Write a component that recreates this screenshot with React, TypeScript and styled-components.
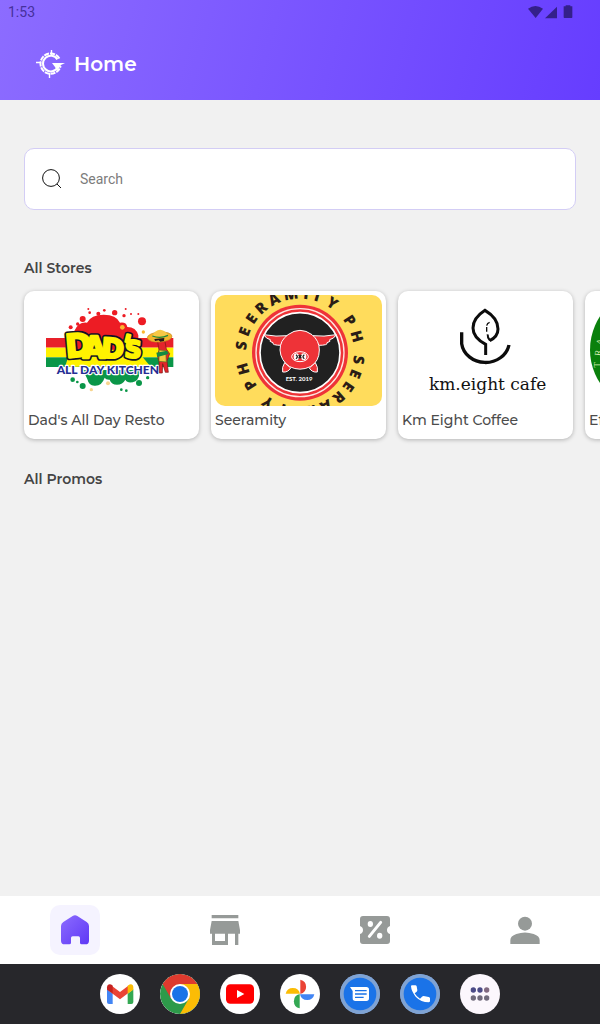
import React from 'react';
import styled, { createGlobalStyle } from 'styled-components';

const GlobalStyle = createGlobalStyle`
  * { box-sizing: border-box; }
  body {
    margin: 0;
    background: #f1f1f1;
    color: #444;
    font-family: Montserrat, Inter, sans-serif;
  }
`;

const Page = styled.div`
  display: flex;
  flex-direction: column;
  min-height: 100vh;
`;

const Header = styled.header`
  background: linear-gradient(105deg, #8c6cff 0%, #663dff 100%);
`;

const StatusBar = styled.div`
  display: flex;
  justify-content: space-between;
  align-items: center;
  height: 24px;
  padding: 0 27px 0 8px;
  color: #46309c;
  font: 14px/24px Roboto, sans-serif;
`;

const StatusIcons = styled.div`
  display: flex;
  align-items: center;
  height: 22px;
`;

const TitleRow = styled.div`
  display: flex;
  align-items: center;
  gap: 8px;
  height: 76px;
  padding: 4px 36px 0;
`;

const Title = styled.h1`
  margin: 0;
  color: #fff;
  font-size: 20px;
  font-weight: 600;
  line-height: 26px;
`;

const Main = styled.main`
  flex: 1;
  padding: 48px 0;
`;

const SearchBox = styled.label`
  display: flex;
  align-items: center;
  gap: 17px;
  height: 62px;
  margin: 0 24px 48px;
  padding: 0 16px;
  background: #fff;
  border: 1px solid #d3cdf5;
  border-radius: 10px;
`;

const SearchInput = styled.input`
  flex: 1;
  min-width: 0;
  border: 0;
  outline: 0;
  padding: 0;
  background: none;
  color: #333;
  font: 14px/20px Roboto, sans-serif;
  &::placeholder { color: #7c7c7c; opacity: 1; }
`;

const SectionTitle = styled.h2`
  margin: 0 24px;
  color: #444;
  font-size: 14px;
  font-weight: 600;
  line-height: 20px;
`;

const StoreList = styled.div`
  display: flex;
  gap: 12px;
  margin-bottom: 22px;
  padding: 13px 24px 8px;
  overflow-x: auto;
  scrollbar-width: none;
`;

const StoreCard = styled.a`
  flex: none;
  width: 175px;
  padding: 4px 4px 9px;
  background: #fff;
  border-radius: 10px;
  box-shadow: 0 1px 4px rgba(0, 0, 0, 0.26);
  color: #4c4c4c;
  text-decoration: none;
`;

const StorePicture = styled.svg`
  display: block;
  width: 100%;
  height: 111px;
  border-radius: 10px;
`;

const StoreName = styled.span`
  display: block;
  margin-top: 4px;
  font-size: 14px;
  font-weight: 500;
  line-height: 20px;
  white-space: nowrap;
`;

const TabBar = styled.nav`
  display: flex;
  padding: 9px 0;
  background: #fff;
`;

const TabCell = styled.div`
  flex: 1;
  display: flex;
  justify-content: center;
`;

const Tab = styled.a<{ $active?: boolean }>`
  display: flex;
  align-items: center;
  justify-content: center;
  width: 50px;
  height: 50px;
  border-radius: 10px;
  background: ${(p) => (p.$active ? '#f5f3ff' : 'transparent')};
  color: #969a98;
`;

const Dock = styled.footer`
  display: flex;
  justify-content: center;
  gap: 20px;
  padding: 10px 0;
  background: #27272b;
`;

const DockButton = styled.button<{ $color?: string }>`
  display: block;
  width: 40px;
  height: 40px;
  padding: 0;
  border: 0;
  border-radius: 50%;
  overflow: hidden;
  background: ${(p) => p.$color ?? '#fff'};
`;

const DadsLogo = () => (
  <StorePicture viewBox="24 30 501 333" aria-hidden="true">
    <rect x="78" y="159" width="382" height="29" fill="#e8202a" />
    <rect x="78" y="188" width="382" height="29" fill="#fff200" />
    <rect x="78" y="217" width="382" height="29" fill="#0a9648" />
    <path fill="#ed1c24" d="M163 138q12-28 38-25 12-24 50-24 38 0 49 24 19-3 22 13 26 0 33 25v45H155z" />
    <path fill="#0a9648" d="M192 262q8 16 11 23 3 16 20 17 22 2 31-24 4 7 15 6 5 15 22 15t25-15q5 10 20 8 20-3 22-25l16-12H185z" />
    <path fill="#fff200" d="M145 215q100-45 222 0l25 30H135z" />
    <g fill="#ed1c24">
      <circle cx="366" cy="109" r="12" /><circle cx="188" cy="102" r="9" />
      <circle cx="284" cy="83" r="8" /><circle cx="235" cy="86" r="6" />
      <circle cx="152" cy="127" r="6" /><circle cx="173" cy="117" r="5" />
      <circle cx="312" cy="92" r="5" /><circle cx="209" cy="83" r="4" />
      <circle cx="253" cy="76" r="4" /><circle cx="205" cy="72" r="3" />
      <circle cx="317" cy="72" r="3" /><circle cx="355" cy="87" r="3" />
      <circle cx="333" cy="87" r="3" />
    </g>
    <g fill="#0a9648">
      <circle cx="188" cy="303" r="9" /><circle cx="158" cy="284" r="7" />
      <circle cx="357" cy="294" r="9" /><circle cx="383" cy="278" r="5" />
      <circle cx="304" cy="314" r="4" /><circle cx="319" cy="317" r="4" />
      <circle cx="172" cy="291" r="4" /><circle cx="337" cy="288" r="4" />
    </g>
    <g fill="#fbb62f">
      <circle cx="307" cy="127" r="7" /><circle cx="370" cy="141" r="5" />
      <circle cx="264" cy="295" r="6" fill="#f7d58f" /><circle cx="214" cy="314" r="5" fill="#f7d58f" />
    </g>
    <g
      fill="#fff200"
      stroke="#101026"
      strokeWidth="8"
      strokeLinejoin="round"
      fontFamily="DejaVu Sans, sans-serif"
      fontWeight="700"
    >
      {[8, 0].map((outline) => (
        <g key={outline} stroke={outline ? '#101026' : '#fff200'} strokeWidth={outline ? 17 : 7}>
          <text x="139" y="218" transform="rotate(-5 139 218)" fontSize="96">D</text>
          <text x="188" y="219" fontSize="88">A</text>
          <text x="242" y="217" transform="rotate(4 242 217)" fontSize="82">D</text>
          <text x="300" y="203" transform="rotate(14 300 203)" fontSize="80">'</text>
          <text x="313" y="216" transform="rotate(4 313 216)" fontSize="70">S</text>
        </g>
      ))}
    </g>
    <text
      x="110"
      y="268"
      fill="#252e94"
      stroke="#fff"
      strokeWidth="7"
      strokeLinejoin="round"
      paintOrder="stroke"
      fontFamily="Lato, sans-serif"
      fontWeight="900"
      fontSize="36"
    >
      ALL DAY KITCHEN
    </text>
    <path fill="#e3252b" stroke="#7a1713" strokeWidth="2" d="M413 170q10-8 22 0l4 22 10 14-8 22 4 34h-9l-8-26-1 28h-9l-1-34-5-20 5-14z" />
    <path fill="#f2ca3f" stroke="#54761f" strokeWidth="2" d="M417 195l20 2 2 34-22-2z" />
    <path fill="#148a42" d="M409 203l32-6 5 10-34 9z" />
    <ellipse cx="419" cy="156" rx="37" ry="15" fill="#f3b52b" stroke="#c98a24" strokeWidth="2" transform="rotate(-4 419 156)" />
    <path fill="#f7c845" d="M398 152q6-17 23-18 18 3 22 17-22 9-45 1z" />
    <path fill="none" stroke="#1c8a3c" strokeWidth="4" d="M397 153q24 9 47-2" />
    <path fill="#251a17" d="M403 162l30-3-1 9-11 2-5-4-11 2z" />
  </StorePicture>
);

const SEAL_LETTERS: [string, number][] = [
  ['S', 187], ['E', 201], ['E', 215], ['R', 229], ['A', 244], ['M', 261], ['I', 276],
  ['T', 287], ['Y', 303], ['P', 327], ['H', 344],
];

const SeeramityLogo = () => (
  <StorePicture viewBox="30 30 501 333" aria-hidden="true">
    <rect x="30" y="30" width="501" height="333" fill="#ffdc5c" />
    <g fill="#2b1d16" fontFamily="Open Sans, sans-serif" fontWeight="800" fontSize="45" textAnchor="middle">
      {[0, 180].map((turn) =>
        SEAL_LETTERS.map(([letter, angle]) => (
          <text
            key={`${turn}-${angle}`}
            transform={`translate(285 203) rotate(${angle + turn + 90}) translate(0 -162)`}
          >
            {letter}
          </text>
        )),
      )}
    </g>
    <circle cx="285" cy="203" r="144" fill="#ee3338" />
    <circle cx="285" cy="203" r="132" fill="none" stroke="#fde6df" strokeWidth="4" />
    <circle cx="285" cy="203" r="120" fill="#212121" stroke="#fff" strokeWidth="5" />
    <g fill="#ee3338" stroke="#fff" strokeWidth="3" strokeLinejoin="round">
      <path d="M248 152q-34 4-72-3 8 13 20 15-5 6 8 9-4 8 26 8z" />
      <path d="M322 152q34 4 72-3-8 13-20 15 5 6-8 9 4 8-26 8z" />
      <path d="M239 233q-9 14-6 28 16 2 24-12z" />
      <path d="M331 233q9 14 6 28-16 2-24-12z" />
      <path d="M249 149q36-26 72 0 22 18 22 46 0 34-27 50-31 15-62 0-27-18-29-50 0-29 24-46z" />
      <ellipse cx="285" cy="215" rx="25" ry="15" />
    </g>
    <g fill="#fff">
      <ellipse cx="274" cy="215" rx="8" ry="10" />
      <ellipse cx="296" cy="215" rx="8" ry="10" />
    </g>
    <g fill="none" stroke="#212121" strokeWidth="4">
      <path d="M273 209q8 6 0 12M298 209q-8 6 0 12M281 210l8 10M289 210l-8 10" />
    </g>
    <text x="282" y="287" fill="#fff" fontFamily="Lato, sans-serif" fontWeight="700" fontSize="18" textAnchor="middle">
      EST. 2019
    </text>
  </StorePicture>
);

const KmEightLogo = () => (
  <StorePicture viewBox="36 30 501 333" aria-hidden="true">
    <g fill="none" stroke="#0c0c0c" strokeWidth="9">
      <path d="M215 142v34a72 65 0 0 0 142 4" strokeWidth="10" />
      <path d="M287 210v-32q-38-20-38-49 0-30 36-53 39 23 39 56 0 23-25 35" />
      <path d="M300 167q-8-10-7-19" strokeWidth="6" />
      <path d="M290 140v-18q2-9 10-10" strokeWidth="4" strokeDasharray="14 4" />
    </g>
    <text x="293" y="315" fill="#111" fontFamily="DejaVu Serif, serif" fontSize="51" textAnchor="middle">
      km.eight cafe
    </text>
  </StorePicture>
);

const GreenLogo = () => (
  <StorePicture viewBox="597 30 501 333" aria-hidden="true">
    <ellipse cx="800" cy="194" rx="200" ry="190" fill="#0a800c" />
    <g fill="#d6efb0" fontFamily="Liberation Serif, serif" fontSize="28">
      <text transform="translate(634 248) rotate(-90)">T</text>
      <text transform="translate(632 214) rotate(-84)">R</text>
      <text transform="translate(636 182) rotate(-76)">A</text>
    </g>
  </StorePicture>
);

const stores = [
  { name: "Dad's All Day Resto", Logo: DadsLogo },
  { name: 'Seeramity', Logo: SeeramityLogo },
  { name: 'Km Eight Coffee', Logo: KmEightLogo },
  { name: 'Ef', Logo: GreenLogo },
];

const BrandMark = () => (
  <svg width="30" height="30" viewBox="0 0 30 30" fill="none" stroke="#fff" aria-hidden="true">
    <path d="M23.4 9.4A10.2 10.2 0 1 0 24.6 17" strokeWidth="2" strokeDasharray="5 1" />
    <path d="M21.4 10.4A7.8 7.8 0 1 0 21.6 18.4" strokeWidth="2" />
    <path d="M15.500 1v5M0 13.500h5M13.500 24v5" strokeWidth="1.400" />
    <path d="M16 14h13l-4 2-4 6-2-4z" fill="#fff" stroke="none" />
  </svg>
);

const HomeIcon = () => (
  <svg width="30" height="30" viewBox="0 0 90 90" aria-hidden="true">
    <defs>
      <linearGradient id="home-fill" x1="0" y1="0" x2="1" y2="1">
        <stop offset="0" stopColor="#8c6cff" />
        <stop offset="1" stopColor="#5f38f5" />
      </linearGradient>
    </defs>
    <path
      fill="url(#home-fill)"
      d="M38 3q7-5 14 0l28 18q7 4 7 12v44q0 11-11 11H65q-5 0-5-5V69q0-5-5-5H38q-5 0-5 5v14q0 5-5 5H14Q3 88 3 77V33q0-8 7-12z"
    />
  </svg>
);

const StoreIcon = () => (
  <svg width="30" height="30" viewBox="0 0 90 90" fill="currentColor" aria-hidden="true">
    <path d="M5 0h80v10H5zM5 18h80l5 27v11h-5v34H75V56H54v34H6V56H0V45zM15 56v22h30V56z" fillRule="evenodd" />
  </svg>
);

const TicketIcon = () => (
  <svg width="30" height="30" viewBox="0 0 90 90" aria-hidden="true">
    <path
      fill="currentColor"
      d="M9 3h72q9 0 9 9v21q-9 3-9 12t9 12v21q0 9-9 9H9q-9 0-9-9V57q9-3 9-12T0 33V12q0-9 9-9z"
    />
    <path d="M28 64l34-42" stroke="#fff" strokeWidth="9" strokeLinecap="round" />
    <ellipse cx="31" cy="27" rx="8" ry="9" fill="#fff" />
    <ellipse cx="59" cy="62" rx="8" ry="9" fill="#fff" />
  </svg>
);

const PersonIcon = () => (
  <svg width="30" height="30" viewBox="0 0 90 90" fill="currentColor" aria-hidden="true">
    <circle cx="45" cy="26" r="21" />
    <path d="M1 87V76q0-13 18-19 26-9 52 0 18 6 18 19v11z" />
  </svg>
);

const GmailIcon = () => (
  <svg width="40" height="40" viewBox="0 0 120 120" aria-hidden="true">
    <path fill="#4285f4" d="M21 46l17 13v31H27q-6 0-6-6z" />
    <path fill="#34a853" d="M83 59l17-13v38q0 6-6 6H83z" />
    <path fill="#ea4335" d="M36 36l24 18 24-18v22L60 76 36 58z" />
    <path fill="#c5221f" d="M21 47v-7c0-9 9-12 16-6l1 1v24z" />
    <path fill="#fbbc04" d="M83 35l2-1c7-6 15-3 15 6v7L83 59z" />
  </svg>
);

const ChromeIcon = () => (
  <svg width="40" height="40" viewBox="0 0 120 120" aria-hidden="true">
    <circle cx="60" cy="60" r="60" fill="#2d9a4a" />
    <path fill="#fbbc05" d="M60 30h52a60 60 0 0 1-52 90l26-45z" />
    <path fill="#de3a2e" d="M8 30a60 60 0 0 1 104 0H60L34 75z" />
    <circle cx="60" cy="60" r="30" fill="#fff" />
    <circle cx="60" cy="60" r="24" fill="#1a73e8" />
  </svg>
);

const YoutubeIcon = () => (
  <svg width="40" height="40" viewBox="0 0 120 120" aria-hidden="true">
    <rect x="18" y="31" width="84" height="58" rx="13" fill="#f00" />
    <path fill="#fff" d="M51 48l22 12-22 12z" />
  </svg>
);

const PhotosIcon = () => (
  <svg width="40" height="40" viewBox="0 0 120 120" aria-hidden="true">
    <path fill="#ea4335" d="M61 17a22 22 0 0 1 0 43z" />
    <path fill="#4285f4" d="M103 61a22 22 0 0 1-43 0z" />
    <path fill="#34a853" d="M59 103a22 22 0 0 1 0-43z" />
    <path fill="#fbbc04" d="M17 59a22 22 0 0 1 43 0z" />
  </svg>
);

const MessagesIcon = () => (
  <svg width="40" height="40" viewBox="0 0 120 120" aria-hidden="true">
    <circle cx="60" cy="60" r="60" fill="#7fa3d4" />
    <circle cx="60" cy="60" r="49" fill="#1a73e8" />
    <path fill="#fff" d="M30 39h49q8 0 8 8v26q0 8-8 8H46q-8 0-8-8V51z" />
    <path d="M45 50h35M45 60h35M45 70h26" stroke="#1a73e8" strokeWidth="4" />
  </svg>
);

const PhoneIcon = () => (
  <svg width="40" height="40" viewBox="0 0 120 120" aria-hidden="true">
    <circle cx="60" cy="60" r="60" fill="#7fa3d4" />
    <circle cx="60" cy="60" r="49" fill="#1a73e8" />
    <path
      fill="#fff"
      d="M36 34h10q3 0 4 3l2 11q0 3-2 5l-6 5q6 11 16 16l6-6q2-2 5-2l15 3q4 1 4 4v9q-1 3-4 3-23 0-39-17Q34 52 33 37q0-3 3-3z"
    />
  </svg>
);

const AppsIcon = () => (
  <svg width="40" height="40" viewBox="0 0 120 120" aria-hidden="true">
    <circle cx="40" cy="48" r="8" fill="#4c4b87" />
    <circle cx="60" cy="48" r="8" fill="#4c4b87" />
    <circle cx="80" cy="48" r="8" fill="#816980" />
    <circle cx="40" cy="72" r="8" fill="#716b7c" />
    <circle cx="60" cy="72" r="8" fill="#716b7c" />
    <circle cx="80" cy="72" r="8" fill="#716b7c" />
  </svg>
);

const tabs = [
  { label: 'Home', Icon: HomeIcon, active: true },
  { label: 'Stores', Icon: StoreIcon },
  { label: 'Promos', Icon: TicketIcon },
  { label: 'Profile', Icon: PersonIcon },
];

const dockApps = [
  { label: 'Gmail', Icon: GmailIcon },
  { label: 'Chrome', Icon: ChromeIcon },
  { label: 'YouTube', Icon: YoutubeIcon },
  { label: 'Photos', Icon: PhotosIcon },
  { label: 'Messages', Icon: MessagesIcon, color: '#7fa3d4' },
  { label: 'Phone', Icon: PhoneIcon, color: '#7fa3d4' },
  { label: 'All apps', Icon: AppsIcon, color: '#fcf7fd' },
];

export default function App() {
  return (
    <Page>
      <GlobalStyle />
      <Header>
        <StatusBar>
          <span>1:53</span>
          <StatusIcons>
            <svg width="45" height="14" viewBox="0 0 135 42" fill="#34208a" aria-hidden="true">
              <path d="M0 11q22-16 45 0L23 39z" />
              <path d="M87 5v35H51z" />
              <path d="M113 4V1h14v3h6v33q0 2-2 2h-22q-2 0-2-2V4z" />
            </svg>
          </StatusIcons>
        </StatusBar>
        <TitleRow>
          <BrandMark />
          <Title>Home</Title>
        </TitleRow>
      </Header>

      <Main>
        <SearchBox>
          <svg width="22" height="22" viewBox="0 0 22 22" fill="none" stroke="#111" aria-hidden="true">
            <circle cx="10" cy="10" r="8.4" />
            <path d="M16 16l4 4" />
          </svg>
          <SearchInput type="search" placeholder="Search" aria-label="Search" />
        </SearchBox>

        <SectionTitle>All Stores</SectionTitle>
        <StoreList>
          {stores.map(({ name, Logo }) => (
            <StoreCard key={name} href="#">
              <Logo />
              <StoreName>{name}</StoreName>
            </StoreCard>
          ))}
        </StoreList>

        <SectionTitle>All Promos</SectionTitle>
      </Main>

      <TabBar>
        {tabs.map(({ label, Icon, active }) => (
          <TabCell key={label}>
            <Tab href="#" aria-label={label} $active={active}>
              <Icon />
            </Tab>
          </TabCell>
        ))}
      </TabBar>

      <Dock>
        {dockApps.map(({ label, Icon, color }) => (
          <DockButton key={label} type="button" aria-label={label} $color={color}>
            <Icon />
          </DockButton>
        ))}
      </Dock>
    </Page>
  );
}
